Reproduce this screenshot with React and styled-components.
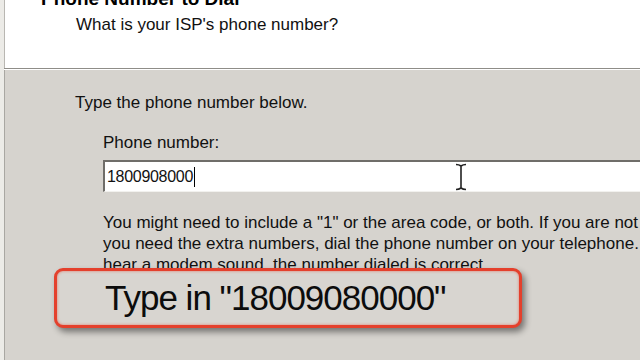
import React from 'react';
import styled, { createGlobalStyle } from 'styled-components';

const GlobalStyle = createGlobalStyle`
    html, body {
        margin: 0;
        padding: 0;
        width: 640px;
        height: 360px;
        overflow: hidden;
        background: #d6d3ce;
    }
`

const Wizard = styled.div`
    position: relative;
    width: 640px;
    height: 360px;
    display: flex;
    flex-direction: column;
    overflow: hidden;
    font-family: 'Liberation Sans', Arial, sans-serif;
    color: #000;
    border-left: 4px solid #ecebe7;
    box-sizing: border-box;
`

const Header = styled.div`
    height: 68px;
    flex-shrink: 0;
    background: #ffffff;
    border-left: 1px solid #b9b7b2;
    padding-left: 36px;
    box-sizing: border-box;
`

const Title = styled.div`
    font-weight: bold;
    font-size: 19px;
    line-height: 20px;
    margin-top: -11px;
`

const Subtitle = styled.div`
    font-size: 17px;
    line-height: 20px;
    margin: 6px 0 0 35px;
    color: #111;
`

const Divider = styled.div`
    height: 1px;
    flex-shrink: 0;
    background: #8f8d88;
    border-bottom: 1px solid #ffffff;
`

const Body = styled.div`
    flex: 1;
    border-left: 1px solid #a9a7a2;
    padding: 23px 0 0 70px;
    font-size: 17px;
    line-height: 20px;
    color: #111;
`

const Intro = styled.div`
    white-space: nowrap;
`

const Field = styled.div`
    margin: 20px 0 0 28px;
`

const Label = styled.div`
    white-space: nowrap;
`

const InputBox = styled.div`
    margin-top: 7px;
    height: 32px;
    width: 560px;
    background: #fff;
    border-top: 2px solid #6f6d69;
    border-left: 2px solid #6f6d69;
    border-bottom: 1px solid #f2f1ee;
    box-sizing: border-box;
    display: flex;
    align-items: center;
    padding-left: 2px;
    font-size: 16px;
    letter-spacing: -0.3px;
`

const Caret = styled.span`
    display: inline-block;
    width: 1px;
    height: 20px;
    background: #000;
    margin-left: 1px;
`

const Hint = styled.div`
    margin-top: 20px;
    white-space: nowrap;
    line-height: 21px;
`

const IBeam = styled.svg`
    position: absolute;
    left: 451px;
    top: 163px;
`

const Callout = styled.div`
    position: absolute;
    left: 50px;
    top: 268px;
    width: 468px;
    height: 60px;
    box-sizing: border-box;
    border: 3px solid #e4402c;
    border-radius: 9px;
    background: #d8d5d0;
    box-shadow: 3px 4px 6px rgba(0, 0, 0, 0.45), inset 0 0 3px rgba(230, 60, 40, 0.6);
    display: flex;
    align-items: center;
    padding-left: 48px;
    font-family: 'Liberation Sans', Arial, sans-serif;
    font-size: 35px;
    letter-spacing: -1px;
    color: #0c0c0c;
    white-space: nowrap;
`

export default function App() {
    return (
        <>
            <GlobalStyle />
            <Wizard>
                <Header>
                    <Title>Phone Number to Dial</Title>
                    <Subtitle>What is your ISP's phone number?</Subtitle>
                </Header>
                <Divider />
                <Body>
                    <Intro>Type the phone number below.</Intro>
                    <Field>
                        <Label>Phone number:</Label>
                        <InputBox>
                            1800908000<Caret />
                        </InputBox>
                        <Hint>
                            You might need to include a "1" or the area code, or both. If you are not sure<br />
                            you need the extra numbers, dial the phone number on your telephone. If you<br />
                            hear a modem sound, the number dialed is correct.
                        </Hint>
                    </Field>
                </Body>
                <IBeam width="12" height="28" viewBox="0 0 12 28">
                    <path d="M1 1.5 Q4 1.5 6 3 Q8 1.5 11 1.5 M6 3 V25 M1 26.5 Q4 26.5 6 25 Q8 26.5 11 26.5" stroke="#222" strokeWidth="1.6" fill="none" />
                </IBeam>
                <Callout>Type in "18009080000"</Callout>
            </Wizard>
        </>
    );
}
